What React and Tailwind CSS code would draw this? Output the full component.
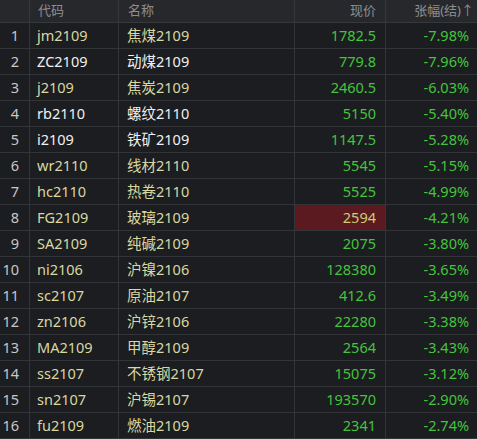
import React from "react";

const rows = [
  ["1", "jm2109", "焦煤2109", "1782.5", "-7.98%", "y"],
  ["2", "ZC2109", "动煤2109", "779.8", "-7.96%", "w"],
  ["3", "j2109", "焦炭2109", "2460.5", "-6.03%", "y"],
  ["4", "rb2110", "螺纹2110", "5150", "-5.40%", "w"],
  ["5", "i2109", "铁矿2109", "1147.5", "-5.28%", "w"],
  ["6", "wr2110", "线材2110", "5545", "-5.15%", "y"],
  ["7", "hc2110", "热卷2110", "5525", "-4.99%", "y"],
  ["8", "FG2109", "玻璃2109", "2594", "-4.21%", "y", true],
  ["9", "SA2109", "纯碱2109", "2075", "-3.80%", "y"],
  ["10", "ni2106", "沪镍2106", "128380", "-3.65%", "y"],
  ["11", "sc2107", "原油2107", "412.6", "-3.49%", "y"],
  ["12", "zn2106", "沪锌2106", "22280", "-3.38%", "y"],
  ["13", "MA2109", "甲醇2109", "2564", "-3.43%", "y"],
  ["14", "ss2107", "不锈钢2107", "15075", "-3.12%", "y"],
  ["15", "sn2107", "沪锡2107", "193570", "-2.90%", "y"],
  ["16", "fu2109", "燃油2109", "2341", "-2.74%", "y"],
];

const cols = "grid grid-cols-[30px_89px_176px_91px_91px]";

export default function App() {
  return (
    <div
      className="w-[477px] h-[439px] overflow-hidden bg-[#1c1d21] text-[14.5px]"
      style={{ fontFamily: '"Noto Sans", "Noto Sans CJK SC", sans-serif' }}
    >
      <div className={`${cols} h-[23px] bg-[#27282c] text-[13px] text-[#8e8e8e] border-b border-[#37383c]`}>
        <div className="border-r border-[#37383c]" />
        <div className="flex items-center pl-[8px] border-r border-[#37383c]">代码</div>
        <div className="flex items-center pl-[9px] border-r border-[#37383c]">名称</div>
        <div className="flex items-center justify-end pr-[9px] border-r border-[#37383c]">现价</div>
        <div className="flex items-center justify-end pr-[3px]">张幅(结)↑</div>
      </div>
      {rows.map(([n, code, name, price, pct, c, hl]) => {
        const tc = c === "y" ? "text-[#d8d8a0]" : "text-[#f0f0f0]";
        return (
          <div key={n} className={`${cols} h-[26px] border-b border-[#333438] leading-none`}>
            <div className="flex items-center justify-end pr-[10px] text-[#c8c8c8] border-r border-[#333438]">{n}</div>
            <div className={`flex items-center pl-[7px] border-r border-[#333438] ${tc}`}>{code}</div>
            <div className={`flex items-center pl-[8px] border-r border-[#333438] ${tc}`}>{name}</div>
            <div
              className={`flex items-center justify-end pr-[9px] border-r border-[#333438] ${
                hl ? "bg-[#5a1a1f] text-[#cdcb7c]" : "text-[#44c43c]"
              }`}
            >
              {price}
            </div>
            <div className="flex items-center justify-end pr-[8px] text-[#44c43c]">{pct}</div>
          </div>
        );
      })}
    </div>
  );
}
